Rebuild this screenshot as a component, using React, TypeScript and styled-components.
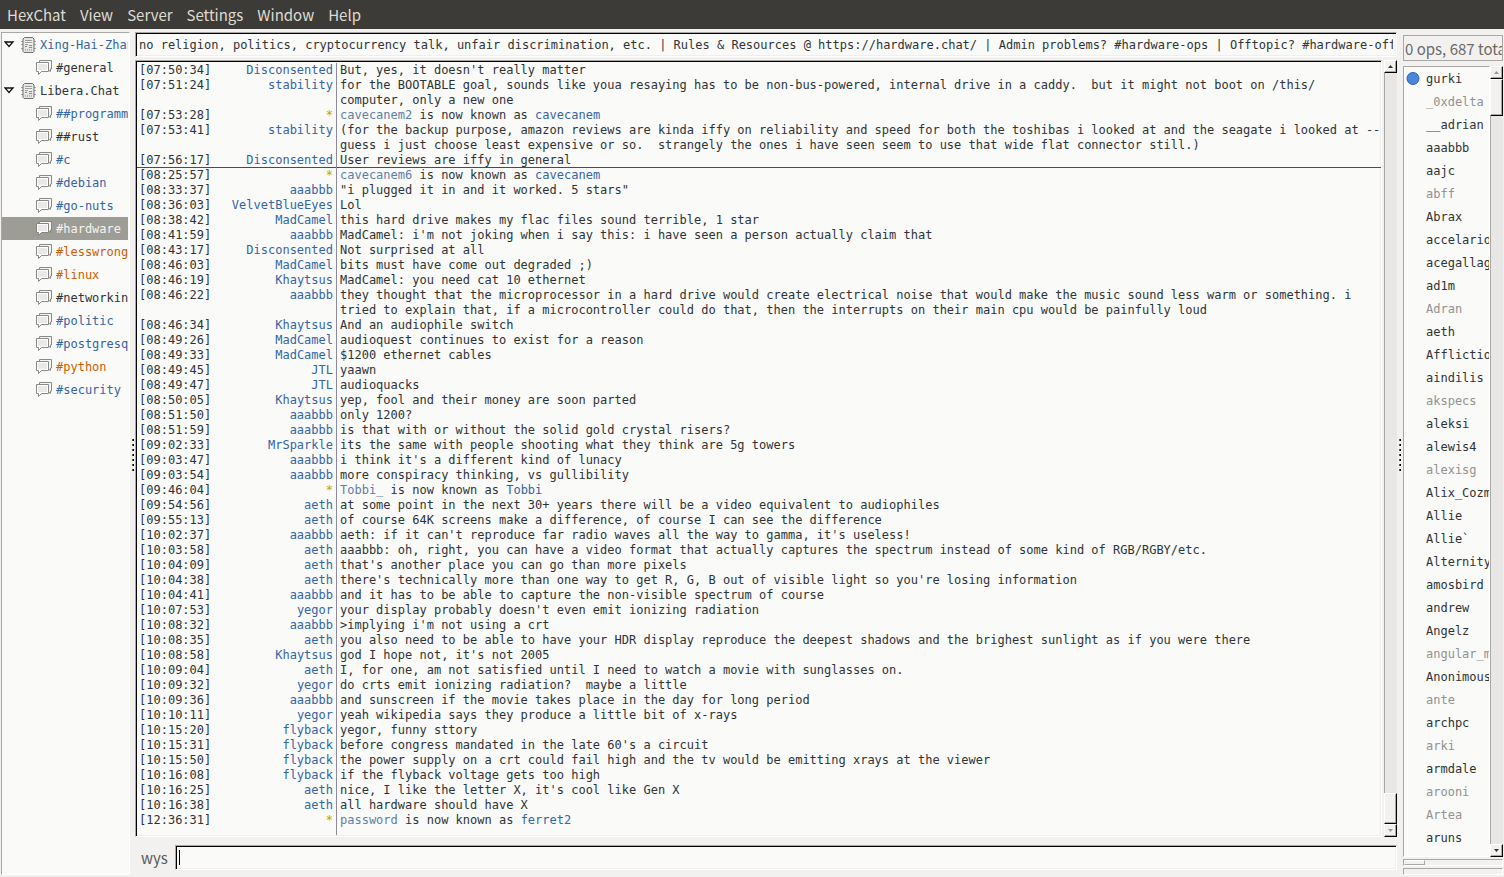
import React, { useState } from "react";
import styled, { createGlobalStyle, css } from "styled-components";

const mono = `"DejaVu Sans Mono", monospace`;
const sans = `"Noto Sans CJK SC", "Noto Sans", sans-serif`;

const Global = createGlobalStyle`
  * { box-sizing: border-box; }
  html, body { margin: 0; height: 100%; }
  #root { height: 100%; }
  body { background: #f2f1f0; overflow: hidden; }
`;

const Window = styled.div`
  display: flex;
  flex-direction: column;
  height: 100vh;
  background: #f2f1f0;
  color: #2e3436;
  font: 12px/15px ${mono};
`;

const MenuBar = styled.nav`
  display: flex;
  flex: none;
  gap: 1px;
  height: 29px;
  background: #3c3b37;
`;

const MenuItem = styled.button`
  border: 0;
  padding: 1px 6px 0 7px;
  background: none;
  color: #dfdbd2;
  font: 15px/24px ${sans};
`;

const Panes = styled.div`
  display: flex;
  flex: 1;
  min-height: 0;
`;

const TreePane = styled.aside`
  flex: none;
  width: 129px;
  margin: 3px 0 2px 1px;
  border: 1px solid #a9a8a7;
  border-right-color: #fff;
  border-bottom-color: #fff;
  padding-right: 1px;
  background: #fafaf9;
  overflow: hidden;
`;

type Tone = "seen" | "event" | "message" | "selected";
const tones: Record<Tone, string> = {
  seen: "#2e3436",
  event: "#3465a4",
  message: "#ce5c00",
  selected: "#f5f4f2",
};

const TreeRow = styled.div<{ $tone: Tone; $child?: boolean }>`
  display: flex;
  align-items: center;
  height: 23px;
  gap: 4px;
  padding-left: ${(p) => (p.$child ? 34 : 2)}px;
  background: ${(p) => (p.$tone === "selected" ? "#9d9c95" : "none")};
  color: ${(p) => tones[p.$tone]};
  white-space: nowrap;
  svg { flex: none; }
`;

const TreeLabel = styled.span`
  flex: 1;
  min-width: 0;
  padding-top: 1px;
  overflow: hidden;
`;

const Grip = styled.div`
  display: flex;
  flex: none;
  flex-direction: column;
  justify-content: center;
  align-items: center;
  gap: 3px;
  width: 5px;
  padding-top: 4px;
`;

const GripDot = styled.i`
  width: 2px;
  height: 2px;
  background: #000;
  border-left: 1px solid #555;
`;

const Main = styled.main`
  display: flex;
  flex: 1;
  flex-direction: column;
  min-width: 0;
  padding: 3px 0 7px;
`;

const sunken = css`
  border: 1px solid #a9a8a7;
  border-right-color: #fff;
  border-bottom-color: #fff;
  box-shadow: inset 1px 1px #000, inset -1px -1px #f0efee;
  background: #fafaf9;
`;

const Topic = styled.input`
  ${sunken}
  flex: none;
  width: 100%;
  height: 25px;
  margin: 0 0 3px;
  padding: 0 3px;
  color: #2e3436;
  font: 12px/15px ${mono};
  outline: none;
  border-radius: 0;
`;

const ChatArea = styled.section`
  display: flex;
  flex: 1;
  gap: 2px;
  min-height: 0;
  margin-bottom: 8px;
`;

const Log = styled.div`
  ${sunken}
  flex: 1;
  min-width: 0;
  display: flex;
  flex-direction: column;
  padding: 2px 0 1px 1px;
  overflow: hidden;
`;

const Line = styled.div<{ $marked?: boolean }>`
  display: grid;
  flex: none;
  grid-template-columns: 200px 1fr;
  box-shadow: ${(p) => (p.$marked ? "inset 0 -1px #8f3902" : "none")};
`;

const Who = styled.div`
  display: flex;
  justify-content: space-between;
  padding: 0 3px 0 2px;
  border-right: 1px solid #8c8a9c;
`;

const Nick = styled.span<{ $event?: boolean }>`
  color: ${(p) => (p.$event ? "#c4a000" : "#3465a4")};
`;

const Message = styled.div`
  padding-left: 3px;
  white-space: pre-wrap;
`;

const OldNick = styled.span`
  color: #5c7fa8;
`;
const NewNick = styled.span`
  color: #3465a4;
`;

const Filler = styled.div`
  flex: 1;
  width: 200px;
  border-right: 1px solid #8c8a9c;
`;

const ScrollBar = styled.div`
  display: flex;
  flex: none;
  flex-direction: column;
  width: 13px;
  background: #e8e7e6;
  border-left: 1px solid #a9a8a7;
`;

const raised = css`
  border: 1px solid #fff;
  border-right-color: #000;
  border-bottom-color: #000;
  box-shadow: inset -1px -1px #a9a8a7;
  background: #f2f1f0;
`;

const ScrollButton = styled.button`
  ${raised}
  display: flex;
  flex: none;
  align-items: center;
  justify-content: center;
  height: 13px;
  margin-left: -1px;
  padding: 0;
`;

const Thumb = styled.div<{ $size: number }>`
  ${raised}
  flex: none;
  height: ${(p) => p.$size}px;
  margin-left: -1px;
`;

const Trough = styled.div`
  flex: 1;
`;

const InputRow = styled.form`
  display: flex;
  flex: none;
  height: 25px;
`;

const InputLabel = styled.label`
  flex: none;
  padding: 0 7px 0 6px;
  color: #5a5a58;
  font: 15px/26px ${sans};
`;

const Field = styled.div`
  ${sunken}
  display: flex;
  flex: 1;
  align-items: center;
  padding: 0 3px;
`;

const Entry = styled.input`
  width: 100%;
  height: 15px;
  border: 0;
  border-left: 1px solid #000;
  padding: 0;
  background: none;
  font: 12px/15px ${mono};
  outline: none;
`;

const UserPane = styled.aside`
  display: flex;
  flex: none;
  flex-direction: column;
  width: 102px;
  padding: 6px 1px 2px 1px;
`;

const Count = styled.div`
  flex: none;
  height: 26px;
  margin-bottom: 5px;
  border: 1px solid #a9a8a7;
  color: #6a6a68;
  font: 15px/26px ${sans};
  padding-left: 1px;
  white-space: nowrap;
  overflow: hidden;
`;

const UserArea = styled.div`
  display: flex;
  flex: 1;
  min-height: 0;
`;

const UserList = styled.ul`
  flex: 1;
  min-width: 0;
  margin: 0;
  padding: 0;
  border: 1px solid #a9a8a7;
  border-right-color: #fff;
  border-bottom-color: #fff;
  background: #fafaf9;
  list-style: none;
  overflow: hidden;
`;

const User = styled.li<{ $away: boolean }>`
  display: grid;
  grid-template-columns: 14px 1fr;
  gap: 6px;
  align-items: center;
  height: 23px;
  padding-left: 2px;
  color: ${(p) => (p.$away ? "#939290" : "#2e3436")};
  white-space: nowrap;
  overflow: hidden;
`;

const UserName = styled.span`
  grid-column: 2;
  padding-top: 1px;
`;

const Meter = styled.div`
  flex: none;
  height: 7px;
  margin-top: 2px;
  border: 1px solid #a9a8a7;
  border-right-color: #fff;
  border-bottom-color: #fff;
`;

const MeterFill = styled.div`
  width: 21px;
  height: 100%;
  border: 1px solid #fff;
  border-right-color: #a9a8a7;
  border-bottom-color: #a9a8a7;
`;

const Expander = () => (
  <svg width="12" height="12" viewBox="0 0 12 12" aria-hidden="true">
    <path d="M1 3h8L5 7.500z" fill="#fff" stroke="#111" strokeWidth="1.3" />
  </svg>
);

const ServerIcon = () => (
  <svg width="16" height="16" viewBox="0 0 16 16" aria-hidden="true">
    <path d="M1 4.500h3M1 7.500h3M1 11.500h3M13 4.500h3M13 7.500h3M13 11.500h3" stroke="#a6a7a4" />
    <path d="M3 2L4.500 .5h8L14 2v12.500l-1 1H4l-1-1z" fill="#e6e6e4" stroke="#6f716d" />
    <path d="M5 3.500h7v4H5z" fill="#f6f6f5" />
    <path d="M5 3.500h7M5 5.500h7M5 7.500h3" stroke="#9a9c98" />
    <path d="M5 9.500h2M9 8.500h3M9 10.500h3" stroke="#8b8d89" />
    <path d="M5.500 12v2M7.500 12v2M9.500 12v2M11.500 12v2" stroke="#b4b5b2" />
  </svg>
);

const ChannelIcon = ({ selected = false }: { selected?: boolean }) => {
  const line = selected ? "#85847d" : "#888a85";
  return (
    <svg width="16" height="16" viewBox="0 0 16 16" aria-hidden="true">
      <path d="M3.500 3.500v-3h12v8.500h-1v2.500l-2-1.500" fill="#f7f7f6" stroke={line} />
      <path d="M.5 2.500h12v9H5.500L2.500 14.500v-3h-2z" fill="#fff" stroke={line} />
      <path d="M2 4h9v6H2z" fill="#e9e9ea" />
    </svg>
  );
};

const Arrow = ({ down = false, dim = false }: { down?: boolean; dim?: boolean }) => (
  <svg width="5" height="3" viewBox="0 0 5 3" aria-hidden="true">
    <path d={down ? "M0 0h5L2.500 3z" : "M0 3h5L2.500 0z"} fill={dim ? "#999" : "#333"} />
  </svg>
);

const tree: [string, Tone, boolean][] = [
  ["Xing-Hai-Zhan", "event", false],
  ["#general", "seen", true],
  ["Libera.Chat", "seen", false],
  ["##programming", "event", true],
  ["##rust", "seen", true],
  ["#c", "event", true],
  ["#debian", "event", true],
  ["#go-nuts", "event", true],
  ["#hardware", "selected", true],
  ["#lesswrong", "message", true],
  ["#linux", "message", true],
  ["#networking", "seen", true],
  ["#politic", "event", true],
  ["#postgresql", "event", true],
  ["#python", "message", true],
  ["#security", "event", true],
];

const log: [string, string, string][] = [
  ["07:50:34", "Disconsented", "But, yes, it doesn't really matter"],
  ["07:51:24", "stability", "for the BOOTABLE goal, sounds like youa resaying has to be non-bus-powered, internal drive in a caddy.  but it might not boot on /this/ computer, only a new one"],
  ["07:53:28", "*", "cavecanem2>cavecanem"],
  ["07:53:41", "stability", "(for the backup purpose, amazon reviews are kinda iffy on reliability and speed for both the toshibas i looked at and the seagate i looked at -- guess i just choose least expensive or so.  strangely the ones i have seen seem to use that wide flat connector still.)"],
  ["07:56:17", "Disconsented", "User reviews are iffy in general"],
  ["08:25:57", "*", "cavecanem6>cavecanem"],
  ["08:33:37", "aaabbb", "\"i plugged it in and it worked. 5 stars\""],
  ["08:36:03", "VelvetBlueEyes", "Lol"],
  ["08:38:42", "MadCamel", "this hard drive makes my flac files sound terrible, 1 star"],
  ["08:41:59", "aaabbb", "MadCamel: i'm not joking when i say this: i have seen a person actually claim that"],
  ["08:43:17", "Disconsented", "Not surprised at all"],
  ["08:46:03", "MadCamel", "bits must have come out degraded ;)"],
  ["08:46:19", "Khaytsus", "MadCamel: you need cat 10 ethernet"],
  ["08:46:22", "aaabbb", "they thought that the microprocessor in a hard drive would create electrical noise that would make the music sound less warm or something. i tried to explain that, if a microcontroller could do that, then the interrupts on their main cpu would be painfully loud"],
  ["08:46:34", "Khaytsus", "And an audiophile switch"],
  ["08:49:26", "MadCamel", "audioquest continues to exist for a reason"],
  ["08:49:33", "MadCamel", "$1200 ethernet cables"],
  ["08:49:45", "JTL", "yaawn"],
  ["08:49:47", "JTL", "audioquacks"],
  ["08:50:05", "Khaytsus", "yep, fool and their money are soon parted"],
  ["08:51:50", "aaabbb", "only 1200?"],
  ["08:51:59", "aaabbb", "is that with or without the solid gold crystal risers?"],
  ["09:02:33", "MrSparkle", "its the same with people shooting what they think are 5g towers"],
  ["09:03:47", "aaabbb", "i think it's a different kind of lunacy"],
  ["09:03:54", "aaabbb", "more conspiracy thinking, vs gullibility"],
  ["09:46:04", "*", "Tobbi_>Tobbi"],
  ["09:54:56", "aeth", "at some point in the next 30+ years there will be a video equivalent to audiophiles"],
  ["09:55:13", "aeth", "of course 64K screens make a difference, of course I can see the difference"],
  ["10:02:37", "aaabbb", "aeth: if it can't reproduce far radio waves all the way to gamma, it's useless!"],
  ["10:03:58", "aeth", "aaabbb: oh, right, you can have a video format that actually captures the spectrum instead of some kind of RGB/RGBY/etc."],
  ["10:04:09", "aeth", "that's another place you can go than more pixels"],
  ["10:04:38", "aeth", "there's technically more than one way to get R, G, B out of visible light so you're losing information"],
  ["10:04:41", "aaabbb", "and it has to be able to capture the non-visible spectrum of course"],
  ["10:07:53", "yegor", "your display probably doesn't even emit ionizing radiation"],
  ["10:08:32", "aaabbb", ">implying i'm not using a crt"],
  ["10:08:35", "aeth", "you also need to be able to have your HDR display reproduce the deepest shadows and the brighest sunlight as if you were there"],
  ["10:08:58", "Khaytsus", "god I hope not, it's not 2005"],
  ["10:09:04", "aeth", "I, for one, am not satisfied until I need to watch a movie with sunglasses on."],
  ["10:09:32", "yegor", "do crts emit ionizing radiation?  maybe a little"],
  ["10:09:36", "aaabbb", "and sunscreen if the movie takes place in the day for long period"],
  ["10:10:11", "yegor", "yeah wikipedia says they produce a little bit of x-rays"],
  ["10:15:20", "flyback", "yegor, funny sttory"],
  ["10:15:31", "flyback", "before congress mandated in the late 60's a circuit"],
  ["10:15:50", "flyback", "the power supply on a crt could fail high and the tv would be emitting xrays at the viewer"],
  ["10:16:08", "flyback", "if the flyback voltage gets too high"],
  ["10:16:25", "aeth", "nice, I like the letter X, it's cool like Gen X"],
  ["10:16:38", "aeth", "all hardware should have X"],
  ["12:36:31", "*", "password>ferret2"],
];

// The last line that was read before the window lost focus.
const lastRead = "07:56:17";

const awayUsers = new Set(["_0xdelta", "abff", "Adran", "akspecs", "alexisg", "angular_m", "ante", "arki", "arooni", "Artea"]);
const users = "gurki _0xdelta __adrian aaabbb aajc abff Abrax accelario acegallag ad1m Adran aeth Afflictio aindilis akspecs aleksi alewis4 alexisg Alix_Cozm Allie Allie` Alternity amosbird andrew Angelz angular_m Anonimous ante archpc arki armdale arooni Artea aruns".split(" ");

const Rename = ({ text }: { text: string }) => {
  const [from, to] = text.split(">");
  return (
    <>
      <OldNick>{from}</OldNick> is now known as <NewNick>{to}</NewNick>
    </>
  );
};

const GripHandle = () => (
  <Grip>
    {[0, 1, 2, 3, 4, 5, 6].map((i) => (
      <GripDot key={i} />
    ))}
  </Grip>
);

export default function App() {
  const [topic, setTopic] = useState(
    "no religion, politics, cryptocurrency talk, unfair discrimination, etc. | Rules & Resources @ https://hardware.chat/ | Admin problems? #hardware-ops | Offtopic? #hardware-offtopic"
  );
  const [draft, setDraft] = useState("");
  return (
    <Window>
      <Global />
      <MenuBar>
        {["HexChat", "View", "Server", "Settings", "Window", "Help"].map((m) => (
          <MenuItem key={m}>{m}</MenuItem>
        ))}
      </MenuBar>
      <Panes>
        <TreePane>
          {tree.map(([name, tone, child]) => (
            <TreeRow key={name} $tone={tone} $child={child}>
              {!child && <Expander />}
              {child ? <ChannelIcon selected={tone === "selected"} /> : <ServerIcon />}
              <TreeLabel>{name}</TreeLabel>
            </TreeRow>
          ))}
        </TreePane>
        <GripHandle />
        <Main>
          <Topic aria-label="Topic" value={topic} onChange={(e) => setTopic(e.target.value)} />
          <ChatArea>
            <Log>
              {log.map(([time, nick, text]) => (
                <Line key={time} $marked={time === lastRead}>
                  <Who>
                    <span>[{time}]</span>
                    <Nick $event={nick === "*"}>{nick}</Nick>
                  </Who>
                  <Message>{nick === "*" ? <Rename text={text} /> : text}</Message>
                </Line>
              ))}
              <Filler />
            </Log>
            <ScrollBar>
              <ScrollButton aria-label="Scroll up"><Arrow /></ScrollButton>
              <Trough />
              <Thumb $size={31} />
              <ScrollButton aria-label="Scroll down"><Arrow down dim /></ScrollButton>
            </ScrollBar>
          </ChatArea>
          <InputRow onSubmit={(e) => e.preventDefault()}>
            <InputLabel htmlFor="entry">wys</InputLabel>
            <Field>
              <Entry id="entry" value={draft} onChange={(e) => setDraft(e.target.value)} />
            </Field>
          </InputRow>
        </Main>
        <GripHandle />
        <UserPane>
          <Count>0 ops, 687 total</Count>
          <UserArea>
            <UserList>
              {users.map((name, i) => (
                <User key={name} $away={awayUsers.has(name)}>
                  {i === 0 && (
                    <svg width="14" height="14" viewBox="0 0 14 14" aria-hidden="true">
                      <circle cx="7" cy="6.500" r="6" fill="#4a87d8" stroke="#2a62b0" />
                    </svg>
                  )}
                  <UserName>{name}</UserName>
                </User>
              ))}
            </UserList>
            <ScrollBar>
              <ScrollButton aria-label="Scroll users up"><Arrow dim /></ScrollButton>
              <Thumb $size={37} />
              <Trough />
              <ScrollButton aria-label="Scroll users down"><Arrow down /></ScrollButton>
            </ScrollBar>
          </UserArea>
          <Meter><MeterFill /></Meter>
          <Meter />
        </UserPane>
      </Panes>
    </Window>
  );
}
